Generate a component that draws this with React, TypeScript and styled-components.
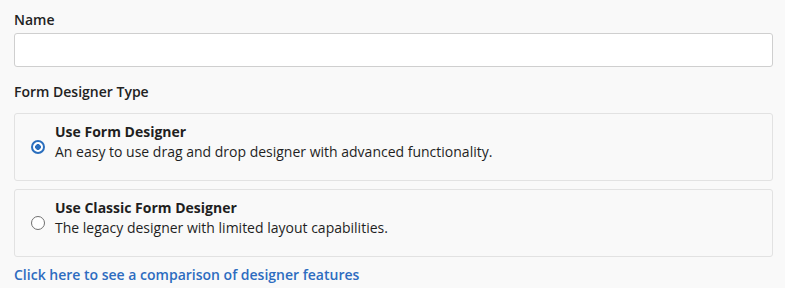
import React, { useState } from "react";
import styled, { createGlobalStyle } from "styled-components";

const GlobalStyle = createGlobalStyle`
  html, body {
    margin: 0;
    padding: 0;
    background-color: #f9f9f9;
  }
  body {
    font-family: "Open Sans", "Liberation Sans", sans-serif;
    font-size: 14px;
    line-height: 20px;
    color: #1f1f1f;
  }
`;

const Page = styled.div`
  display: flex;
  flex-direction: column;
  padding: 10px 12px 0 14px;
`;

const FieldLabel = styled.label`
  display: block;
  font-weight: 600;
  color: #222;
`;

const NameInput = styled.input`
  box-sizing: border-box;
  width: 100%;
  height: 34px;
  margin-top: 3px;
  padding: 0 10px;
  border: 1px solid #cfcfcf;
  border-radius: 3px;
  background: #fff;
  font: inherit;
  outline: none;
`;

const SectionLabel = styled(FieldLabel)`
  margin-top: 15px;
`;

const OptionList = styled.div`
  display: flex;
  flex-direction: column;
  gap: 8px;
  margin-top: 11px;
`;

const OptionCard = styled.label`
  display: grid;
  grid-template-columns: 14px 1fr;
  column-gap: 10px;
  align-items: center;
  box-sizing: border-box;
  height: 68px;
  padding: 8px 16px 18px 16px;
  border: 1px solid #e2e2e2;
  border-radius: 3px;
  cursor: pointer;
`;

const Radio = styled.span<{ checked: boolean }>`
  box-sizing: border-box;
  width: 14px;
  height: 14px;
  margin-top: 10px;
  border-radius: 50%;
  border: ${({ checked }) => (checked ? "2.5px solid #2a6ebd" : "1px solid #707070")};
  background: ${({ checked }) =>
    checked ? "radial-gradient(circle, #2a6ebd 0 2.6px, #fff 3.1px)" : "#fff"};
`;

const OptionText = styled.div`
  display: flex;
  flex-direction: column;
`;

const OptionTitle = styled.span`
  font-weight: 700;
`;

const OptionDesc = styled.span`
  font-weight: 400;
`;

const CompareLink = styled.a`
  margin-top: 8px;
  color: #2d6cc0;
  font-weight: 600;
  text-decoration: none;
`;

const options = [
  {
    id: "new",
    title: "Use Form Designer",
    desc: "An easy to use drag and drop designer with advanced functionality.",
  },
  {
    id: "classic",
    title: "Use Classic Form Designer",
    desc: "The legacy designer with limited layout capabilities.",
  },
];

const App: React.FC = () => {
  const [name, setName] = useState("");
  const [type, setType] = useState("new");

  return (
    <>
      <GlobalStyle />
      <Page>
        <FieldLabel htmlFor="name">Name</FieldLabel>
        <NameInput id="name" value={name} onChange={(e) => setName(e.target.value)} />
        <SectionLabel>Form Designer Type</SectionLabel>
        <OptionList>
          {options.map((o) => (
            <OptionCard key={o.id} onClick={() => setType(o.id)}>
              <Radio checked={type === o.id} />
              <OptionText>
                <OptionTitle>{o.title}</OptionTitle>
                <OptionDesc>{o.desc}</OptionDesc>
              </OptionText>
            </OptionCard>
          ))}
        </OptionList>
        <CompareLink href="#">Click here to see a comparison of designer features</CompareLink>
      </Page>
    </>
  );
};

export default App;
